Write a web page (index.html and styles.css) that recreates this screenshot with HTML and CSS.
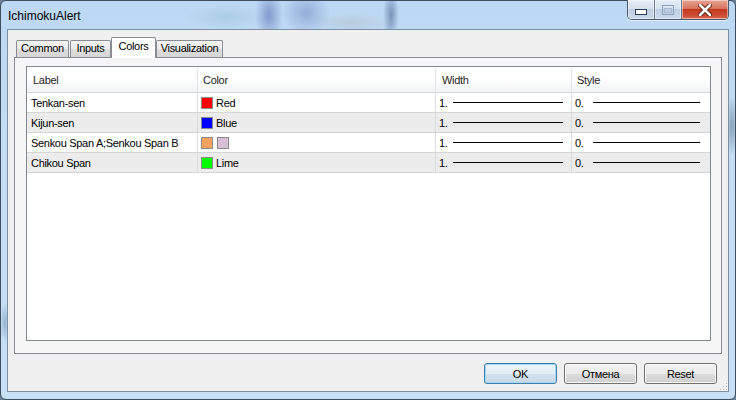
FILE: index.html
```html
<!DOCTYPE html>
<html lang="en">
<head>
    <meta charset="UTF-8">
    <title>IchimokuAlert</title>
    <link rel="stylesheet" href="styles.css">
</head>
<body>
    <div class="window">
        <div class="titlebar">
            <span class="title">IchimokuAlert</span>
            <div class="caption-buttons">
                <div class="cap-btn cap-min">
                    <svg width="12" height="6" viewBox="0 0 12 6"><rect x="0.5" y="0.5" width="11" height="5" fill="#fff" stroke="#2c3e55"/></svg>
                </div>
                <div class="cap-btn cap-max">
                    <svg width="12" height="10" viewBox="0 0 12 10"><rect x="0.5" y="0.5" width="11" height="9" fill="none" stroke="#8ea3bb"/><rect x="2.5" y="3.5" width="7" height="4" fill="none" stroke="#a9bbd0"/></svg>
                </div>
                <div class="cap-btn cap-close">
                    <svg width="14" height="12" viewBox="0 0 14 12"><path d="M2 1 L12 11 M12 1 L2 11" stroke="#5a1a10" stroke-width="4.5" stroke-linecap="round"/><path d="M2 1 L12 11 M12 1 L2 11" stroke="#fff" stroke-width="2.5" stroke-linecap="round"/></svg>
                </div>
            </div>
        </div>

        <div class="client">
            <div class="tabs">
                <div class="tab tab-common">Common</div>
                <div class="tab tab-inputs">Inputs</div>
                <div class="tab tab-colors active">Colors</div>
                <div class="tab tab-visual">Visualization</div>
            </div>

            <div class="tab-panel">
                <div class="grid">
                    <div class="grid-row grid-head">
                        <div class="cell col-label">Label</div>
                        <div class="cell col-color">Color</div>
                        <div class="cell col-width">Width</div>
                        <div class="cell col-style">Style</div>
                    </div>
                    <div class="grid-row">
                        <div class="cell col-label">Tenkan-sen</div>
                        <div class="cell col-color"><span class="swatch swatch-red"></span>Red</div>
                        <div class="cell col-width"><span class="val">1.</span><span class="line"></span></div>
                        <div class="cell col-style"><span class="val">0.</span><span class="line"></span></div>
                    </div>
                    <div class="grid-row alt">
                        <div class="cell col-label">Kijun-sen</div>
                        <div class="cell col-color"><span class="swatch swatch-blue"></span>Blue</div>
                        <div class="cell col-width"><span class="val">1.</span><span class="line"></span></div>
                        <div class="cell col-style"><span class="val">0.</span><span class="line"></span></div>
                    </div>
                    <div class="grid-row">
                        <div class="cell col-label">Senkou Span A;Senkou Span B</div>
                        <div class="cell col-color"><span class="swatch swatch-sandy"></span><span class="swatch swatch-thistle"></span></div>
                        <div class="cell col-width"><span class="val">1.</span><span class="line"></span></div>
                        <div class="cell col-style"><span class="val">0.</span><span class="line"></span></div>
                    </div>
                    <div class="grid-row alt">
                        <div class="cell col-label">Chikou Span</div>
                        <div class="cell col-color"><span class="swatch swatch-lime"></span>Lime</div>
                        <div class="cell col-width"><span class="val">1.</span><span class="line"></span></div>
                        <div class="cell col-style"><span class="val">0.</span><span class="line"></span></div>
                    </div>
                </div>
            </div>

            <div class="dialog-buttons">
                <button class="btn btn-default">OK</button>
                <button class="btn">Отмена</button>
                <button class="btn">Reset</button>
            </div>

            <svg class="size-grip" width="10" height="10" viewBox="0 0 10 10">
                <g fill="#b8b8b8">
                    <rect x="8" y="2" width="1" height="1"/>
                    <rect x="5" y="5" width="1" height="1"/><rect x="8" y="5" width="1" height="1"/>
                    <rect x="2" y="8" width="1" height="1"/><rect x="5" y="8" width="1" height="1"/><rect x="8" y="8" width="1" height="1"/>
                </g>
                <g fill="#fff">
                    <rect x="9" y="3" width="1" height="1"/>
                    <rect x="6" y="6" width="1" height="1"/><rect x="9" y="6" width="1" height="1"/>
                    <rect x="3" y="9" width="1" height="1"/><rect x="6" y="9" width="1" height="1"/><rect x="9" y="9" width="1" height="1"/>
                </g>
            </svg>
        </div>
    </div>
</body>
</html>
```

FILE: styles.css
```css
* {
    box-sizing: border-box;
}

body {
    margin: 0;
    width: 736px;
    height: 400px;
    overflow: hidden;
    background: #6a8099;
    font-family: "Liberation Sans", Arial, sans-serif;
    font-size: 11px;
    letter-spacing: -0.3px;
    color: #000;
}

/* aero frame, with the blurred desktop showing through */
.window {
    width: 736px;
    height: 400px;
    border: 1px solid #3e4d5e;
    border-radius: 6px;
    padding: 0 6px 7px 6px;
    display: flex;
    flex-direction: column;
    background:
        radial-gradient(ellipse 14px 26px at 268px 14px, rgba(60, 80, 160, 0.45), rgba(60, 80, 160, 0)),
        radial-gradient(ellipse 24px 22px at 305px 12px, rgba(70, 95, 165, 0.35), rgba(70, 95, 165, 0)),
        radial-gradient(ellipse 8px 26px at 390px 14px, rgba(40, 60, 110, 0.45), rgba(40, 60, 110, 0)),
        radial-gradient(ellipse 40px 12px at 225px 16px, rgba(120, 175, 175, 0.25), rgba(120, 175, 175, 0)),
        radial-gradient(ellipse 40px 10px at 350px 22px, rgba(170, 150, 110, 0.2), rgba(170, 150, 110, 0)),
        radial-gradient(ellipse 6px 30px at 731px 125px, rgba(50, 70, 100, 0.4), rgba(50, 70, 100, 0)),
        radial-gradient(ellipse 5px 20px at 4px 322px, rgba(50, 100, 150, 0.35), rgba(50, 100, 150, 0)),
        linear-gradient(#bcd8f4, #c4ddf4 40%, #c8e0f5);
}

.titlebar {
    height: 28px;
    flex: none;
    display: flex;
    justify-content: space-between;
    align-items: flex-start;
}

.title {
    font-size: 12px;
    line-height: 14px;
    letter-spacing: 0;
    margin: 8px 0 0 1px;
}

.caption-buttons {
    display: flex;
    margin-top: -1px;
    height: 20px;
    border: 1px solid #49586b;
    border-top: none;
    border-radius: 0 0 5px 5px;
    overflow: hidden;
    box-shadow: 0 1px 0 rgba(255, 255, 255, 0.6);
}

.cap-btn {
    height: 19px;
    display: flex;
    align-items: center;
    justify-content: center;
    box-shadow: inset 0 0 0 1px rgba(255, 255, 255, 0.45);
}

.cap-min,
.cap-max {
    width: 27px;
    border-right: 1px solid #6b7c90;
    background: linear-gradient(#e4ecf6, #d6e2ef 45%, #bfcfe2 50%, #c9d9ea);
}

.cap-min svg {
    margin-top: 5px;
}

.cap-close {
    width: 46px;
    background: linear-gradient(#e8a594, #d7735c 45%, #c2391f 50%, #cd5138 85%, #d9735a);
}

/* dialog body */
.client {
    flex: 1;
    position: relative;
    border: 1px solid #7d8fa3;
    background: #f0f0f0;
    padding: 7px 6px 0 6px;
    display: flex;
    flex-direction: column;
}

.tabs {
    display: flex;
    align-items: flex-end;
    height: 20px;
    padding-left: 2px;
    position: relative;
    z-index: 1;
}

.tab {
    height: 17px;
    border: 1px solid #898c95;
    border-bottom: none;
    border-radius: 2px 2px 0 0;
    background: linear-gradient(#f3f3f3, #ebebeb 50%, #dddddd 51%, #d6d6d6);
    text-align: center;
    line-height: 15px;
    white-space: nowrap;
}

.tab-common { width: 53px; }
.tab-inputs { width: 41px; margin-left: 1px; }
.tab-colors { width: 45px; }
.tab-visual { width: 67px; }

.tab.active {
    height: 21px;
    margin-bottom: -1px;
    background: #fff;
    line-height: 17px;
}

.tab-panel {
    height: 297px;
    flex: none;
    border: 1px solid #898c95;
    background: #f6f6f6;
    padding: 8px 10px 0 11px;
}

/* colour list */
.grid {
    height: 275px;
    border: 1px solid #828790;
    background: #fff;
}

.grid-row {
    display: flex;
    height: 20px;
    border-bottom: 1px solid #d6d6d6;
}

.grid-row.alt {
    background: #ececec;
}

.grid-head {
    height: 26px;
    background: linear-gradient(#ffffff 45%, #f2f3f5);
    border-bottom-color: #d5d5d5;
}

.cell {
    display: flex;
    align-items: center;
    white-space: nowrap;
    overflow: hidden;
    border-right: 1px solid #dcdcdc;
    padding-left: 3px;
}

.grid-head .cell {
    border-right-color: #e3e4e6;
    color: #1e1e1e;
}

.col-label { width: 171px; padding-left: 4px; }
.col-color { width: 238px; }
.col-width { width: 136px; }
.col-style { width: 138px; border-right: none; }

.grid-head .col-label { padding-left: 6px; }
.grid-head .col-color { padding-left: 5px; }
.grid-head .col-width { padding-left: 6px; }
.grid-head .col-style { padding-left: 5px; }

.swatch {
    width: 12px;
    height: 12px;
    border: 1px solid #8a8a8a;
    margin-right: 3px;
}

.swatch + .swatch {
    margin-left: 1px;
}

.swatch-red { background: #ff0000; }
.swatch-blue { background: #0000ff; }
.swatch-sandy { background: #f4a460; }
.swatch-thistle { background: #d8bfd8; }
.swatch-lime { background: #00ff00; }

.col-width .val { width: 14px; }
.col-style .val { width: 18px; }

.line {
    height: 1px;
    background: #000;
}

.col-width .line { width: 110px; }
.col-style .line { width: 107px; }

/* OK / Cancel / Reset */
.dialog-buttons {
    display: flex;
    justify-content: flex-end;
    gap: 7px;
    margin-top: 9px;
    padding-right: 5px;
}

.btn {
    width: 73px;
    height: 21px;
    padding: 0;
    border: 1px solid #707070;
    border-radius: 3px;
    background: linear-gradient(#f2f2f2, #ebebeb 50%, #dddddd 51%, #cfcfcf);
    box-shadow: inset 0 0 0 1px #fbfbfb;
    font-family: "Liberation Sans", Arial, sans-serif;
    font-size: 11px;
    letter-spacing: -0.3px;
    color: #000;
}

.btn-default {
    border-color: #3c7fb1;
    background: linear-gradient(#eef5fa, #e2edf5 50%, #d2e1ec 51%, #c9d9e6);
    box-shadow: inset 0 0 0 1px #a6d6f4;
}

.size-grip {
    position: absolute;
    right: 0;
    bottom: 0;
}
```
